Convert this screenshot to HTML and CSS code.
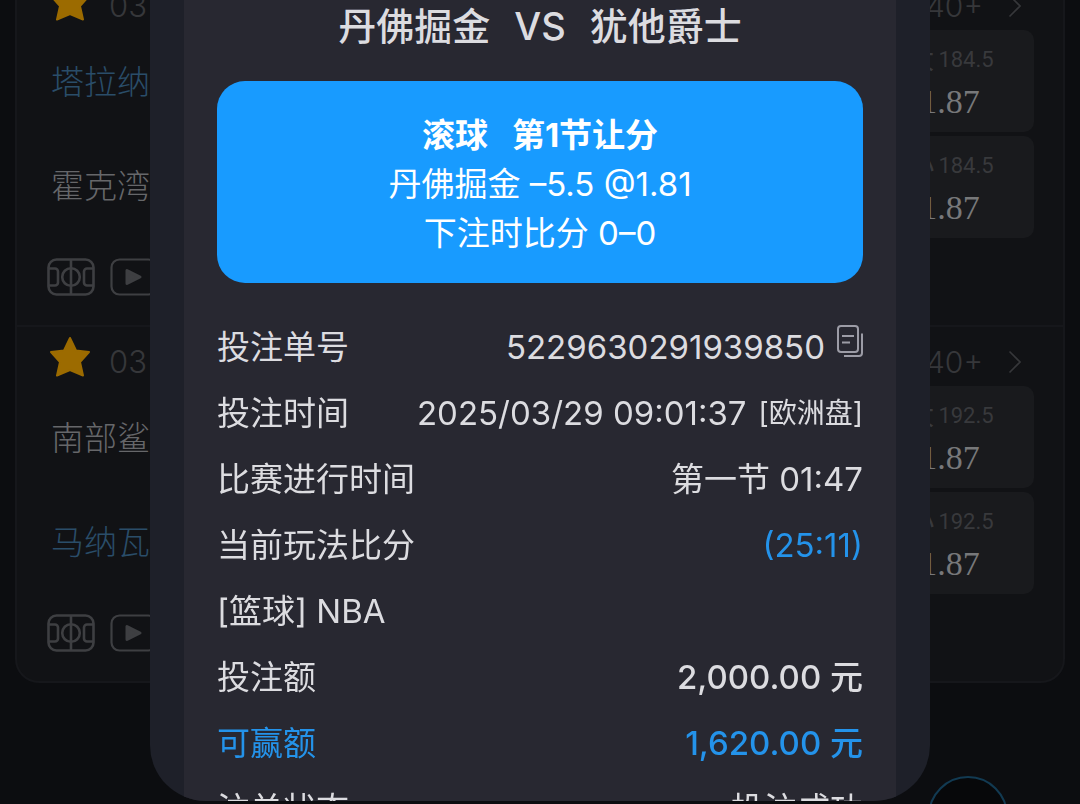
FILE: index.html
```html
<!doctype html>
<html lang="zh-CN">
<head>
    <meta charset="UTF-8">
    <meta name="viewport" content="width=device-width, initial-scale=1.0">
    <link rel="stylesheet" href="styles.css">
    <title>注单详情</title>
</head>
<body>
    <svg class="sprite" width="0" height="0" aria-hidden="true">
        <symbol id="star" viewBox="0 0 42 42">
            <path d="M21 2 L27 14.500 L40 16 L31 26 L34 39.500 L21 34 L8 39.500 L11 26 L2 16 L15 14.500 Z" fill="currentColor" stroke="currentColor" stroke-width="2" stroke-linejoin="round"/>
        </symbol>
        <symbol id="court" viewBox="0 0 48 38">
            <g fill="none" stroke="currentColor" stroke-width="2.600">
                <rect x="1.500" y="1.500" width="45" height="35" rx="8"/>
                <path d="M24 1.500V36.500M1.500 10.500H8a3 3 0 0 1 3 3v11a3 3 0 0 1-3 3H1.500M46.500 10.500H40a3 3 0 0 0-3 3v11a3 3 0 0 0 3 3h6.500"/>
                <circle cx="24" cy="19" r="8.800"/>
            </g>
        </symbol>
        <symbol id="play" viewBox="0 0 48 38">
            <rect x="1.500" y="1.500" width="45" height="35" rx="8" fill="none" stroke="currentColor" stroke-width="2.200"/>
            <path d="M17 12.500v13L30 19z" fill="currentColor" stroke="currentColor" stroke-width="3" stroke-linejoin="round"/>
        </symbol>
        <symbol id="arrow" viewBox="0 0 14 24">
            <path d="M2.500 1.500L13 12L2.500 22.500" fill="none" stroke="currentColor" stroke-width="1.600"/>
        </symbol>
    </svg>

    <main class="matches">
        <section class="match">
            <div class="match-head">
                <button class="fav" aria-label="收藏"><svg><use href="#star"/></svg></button>
                <span class="date">03</span>
                <a class="more" href="#">40+<svg><use href="#arrow"/></svg></a>
            </div>
            <div class="match-body">
                <div class="teams">
                    <span class="team serve">塔拉纳</span>
                    <span class="team">霍克湾</span>
                </div>
                <div class="odds">
                    <button class="odd"><span class="line"><i>大</i>184.5</span><span class="price">1.87</span></button>
                    <button class="odd"><span class="line"><i>小</i>184.5</span><span class="price">1.87</span></button>
                </div>
            </div>
            <div class="media">
                <svg><use href="#court"/></svg>
                <svg><use href="#play"/></svg>
            </div>
        </section>
        <section class="match">
            <div class="match-head">
                <button class="fav" aria-label="收藏"><svg><use href="#star"/></svg></button>
                <span class="date">03</span>
                <a class="more" href="#">40+<svg><use href="#arrow"/></svg></a>
            </div>
            <div class="match-body">
                <div class="teams">
                    <span class="team">南部鲨</span>
                    <span class="team serve">马纳瓦</span>
                </div>
                <div class="odds">
                    <button class="odd"><span class="line"><i>大</i>192.5</span><span class="price">1.87</span></button>
                    <button class="odd"><span class="line"><i>小</i>192.5</span><span class="price">1.87</span></button>
                </div>
            </div>
            <div class="media">
                <svg><use href="#court"/></svg>
                <svg><use href="#play"/></svg>
            </div>
        </section>
    </main>

    <button class="float-btn" aria-label="菜单"></button>

    <div class="overlay">
        <div class="dialog" role="dialog" aria-labelledby="title">
            <div class="ticket">
                <h1 id="title"><span>丹佛掘金</span><span>VS</span><span>犹他爵士</span></h1>
                <div class="bet">
                    <p class="bet-type"><span>滚球</span><span>第1节让分</span></p>
                    <p>丹佛掘金 –5.5 @1.81</p>
                    <p>下注时比分 0–0</p>
                </div>
                <dl class="info">
                    <div class="row">
                        <dt>投注单号</dt>
                        <dd>5229630291939850
                            <button class="copy" aria-label="复制">
                                <svg viewBox="0 0 26 32" fill="none" stroke="currentColor" stroke-width="2">
                                    <rect x="1" y="1" width="20" height="26" rx="3"/>
                                    <path d="M5 11H17M5 17.500H13M25 8.500V28a3 3 0 0 1-3 3H7"/>
                                </svg>
                            </button>
                        </dd>
                    </div>
                    <div class="row">
                        <dt>投注时间</dt>
                        <dd>2025/03/29 09:01:37 <small>[欧洲盘]</small></dd>
                    </div>
                    <div class="row">
                        <dt>比赛进行时间</dt>
                        <dd>第一节 01:47</dd>
                    </div>
                    <div class="row">
                        <dt>当前玩法比分</dt>
                        <dd class="blue">(25:11)</dd>
                    </div>
                    <div class="row">
                        <dt>[篮球] NBA</dt>
                    </div>
                    <div class="row">
                        <dt>投注额</dt>
                        <dd class="money">2,000.00 元</dd>
                    </div>
                    <div class="row blue">
                        <dt>可赢额</dt>
                        <dd class="money">1,620.00 元</dd>
                    </div>
                    <div class="row">
                        <dt>注单状态</dt>
                        <dd>投注成功</dd>
                    </div>
                </dl>
            </div>
        </div>
    </div>
</body>
</html>
```
FILE: styles.css
```css
*{
    box-sizing: border-box;
}
body{
    margin: 0;
    height: 100vh;
    overflow: hidden;
    background: #0c0d10;
    color: #dcdce0;
    font-family: Inter, "Noto Sans CJK SC", sans-serif;
    font-size: 33px;
}
button{
    padding: 0;
    border: 0;
    background: none;
    color: inherit;
    font: inherit;
    cursor: pointer;
}
svg{
    display: block;
}
.sprite{
    position: absolute;
}

/* 赛事列表 */
.matches{
    margin: -31px 15px 0;
    border: 2px solid #16171b;
    border-radius: 24px;
    background: #111215;
}
.match{
    padding: 0 29px 29px;
}
.match + .match{
    border-top: 2px solid #16171b;
}
.match-head{
    display: flex;
    align-items: center;
    height: 59px;
    color: #36373a;
    font-size: 31px;
    font-weight: 300;
}
.fav{
    margin: 0 18px 0 3px;
    color: #9c6b00;
}
.fav svg{
    width: 42px;
    height: 42px;
}
.date{
    padding-top: 10px;
}
.more{
    display: flex;
    align-items: center;
    gap: 24px;
    margin-left: auto;
    padding: 10px 13px 0 0;
    color: inherit;
    font-size: 30px;
    text-decoration: none;
}
.more svg{
    width: 14px;
    height: 24px;
}
.match-body{
    display: flex;
    justify-content: space-between;
}
.teams{
    display: grid;
    grid-auto-rows: 100px;
    row-gap: 4px;
    align-items: center;
    padding-left: 5px;
}
.team{
    color: #66676a;
    font-weight: 300;
}
.serve{
    color: #2a4d69;
}
.odds{
    display: grid;
    grid-auto-rows: 102px;
    row-gap: 4px;
    width: 168px;
}
.odd{
    display: flex;
    flex-direction: column;
    align-items: center;
    justify-content: center;
    border-radius: 10px;
    background: #191a1d;
}
.line{
    display: flex;
    align-items: center;
    gap: 4px;
    color: #38393c;
    font-family: Roboto, "Noto Sans CJK SC", sans-serif;
    font-size: 22px;
    line-height: 42px;
}
.line i{
    font-size: 28px;
    font-style: normal;
}
.price{
    color: #77787a;
    font-family: "Liberation Serif", serif;
    font-size: 34px;
    line-height: 42px;
}
.media{
    display: flex;
    gap: 15px;
    margin-top: 20px;
    padding-left: 1px;
    color: #3e3f42;
}
.media svg{
    width: 48px;
    height: 38px;
}
.float-btn{
    position: absolute;
    right: 72px;
    bottom: -52px;
    width: 80px;
    height: 80px;
    border: 2px solid #123a52;
    border-radius: 50%;
    background: #07080a;
}

/* 注单弹窗 */
.overlay{
    position: fixed;
    inset: 0;
    padding: 0 150px 3px;
}
.dialog{
    height: 100%;
    padding: 0 34px;
    overflow: hidden;
    border-radius: 0 0 56px 56px;
    background: #1e2029;
}
.ticket{
    padding: 0 33px;
    background: #282831;
}
h1{
    display: flex;
    justify-content: center;
    gap: 24px;
    margin: 0;
    padding-bottom: 29px;
    font-size: 38px;
    font-weight: 500;
    line-height: 52px;
}
.bet{
    padding: 30px 0 25px;
    border-radius: 28px;
    background: #189bff;
    color: #fff;
    line-height: 49px;
    text-align: center;
}
.bet p{
    margin: 0;
}
.bet .bet-type{
    display: flex;
    justify-content: center;
    gap: 24px;
    font-weight: 700;
}
.info{
    margin: 0;
    padding-top: 31px;
}
.row{
    display: flex;
    justify-content: space-between;
    line-height: 66px;
}
dd{
    display: flex;
    align-items: center;
    gap: 12px;
    margin: 0;
}
.copy{
    padding-bottom: 12px;
    color: #9c9ca6;
}
.copy svg{
    width: 26px;
    height: 32px;
}
small{
    font-size: 28px;
}
.money{
    font-weight: 500;
}
.blue{
    color: #2493ea;
}
```
